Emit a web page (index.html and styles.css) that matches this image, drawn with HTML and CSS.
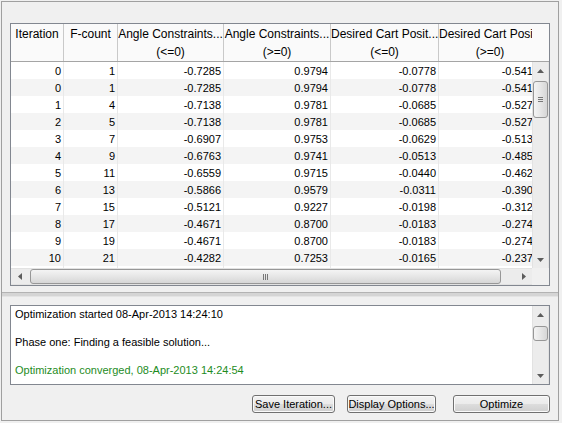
FILE: index.html
```html
<!DOCTYPE html>
<html lang="en">
<head>
  <meta charset="UTF-8" />
  <title>Optimization Progress</title>
  <link rel="stylesheet" href="styles.css">
</head>
<body>

  <div class="window">
    <div class="upper">
      <div class="grid-frame">

        <div class="head-row">
          <div class="head-view">
            <table class="grid head">
              <tr>
                <th class="c1">Iteration</th>
                <th class="c2">F-count</th>
                <th class="c3">Angle Constraints...<br>(&lt;=0)</th>
                <th class="c4">Angle Constraints...<br>(&gt;=0)</th>
                <th class="c5">Desired Cart Posit...<br>(&lt;=0)</th>
                <th class="c6">Desired Cart Position...<br>(&gt;=0)</th>
              </tr>
            </table>
          </div>
          <div class="head-corner"></div>
        </div>

        <div class="body-row">
          <div class="body-view">
            <table class="grid body">
              <tr><td class="c1">0</td><td class="c2">1</td><td class="c3">-0.7285</td><td class="c4">0.9794</td><td class="c5">-0.0778</td><td class="c6">-0.5412</td></tr>
              <tr><td>0</td><td>1</td><td>-0.7285</td><td>0.9794</td><td>-0.0778</td><td>-0.5412</td></tr>
              <tr><td>1</td><td>4</td><td>-0.7138</td><td>0.9781</td><td>-0.0685</td><td>-0.5277</td></tr>
              <tr><td>2</td><td>5</td><td>-0.7138</td><td>0.9781</td><td>-0.0685</td><td>-0.5277</td></tr>
              <tr><td>3</td><td>7</td><td>-0.6907</td><td>0.9753</td><td>-0.0629</td><td>-0.5136</td></tr>
              <tr><td>4</td><td>9</td><td>-0.6763</td><td>0.9741</td><td>-0.0513</td><td>-0.4853</td></tr>
              <tr><td>5</td><td>11</td><td>-0.6559</td><td>0.9715</td><td>-0.0440</td><td>-0.4621</td></tr>
              <tr><td>6</td><td>13</td><td>-0.5866</td><td>0.9579</td><td>-0.0311</td><td>-0.3908</td></tr>
              <tr><td>7</td><td>15</td><td>-0.5121</td><td>0.9227</td><td>-0.0198</td><td>-0.3127</td></tr>
              <tr><td>8</td><td>17</td><td>-0.4671</td><td>0.8700</td><td>-0.0183</td><td>-0.2744</td></tr>
              <tr><td>9</td><td>19</td><td>-0.4671</td><td>0.8700</td><td>-0.0183</td><td>-0.2744</td></tr>
              <tr><td>10</td><td>21</td><td>-0.4282</td><td>0.7253</td><td>-0.0165</td><td>-0.2371</td></tr>
              <tr><td>11</td><td>23</td><td>-0.3894</td><td>0.6412</td><td>-0.0151</td><td>-0.2032</td></tr>
            </table>
          </div>
          <div class="vscroll">
            <div class="arrow">
              <svg width="7" height="4"><polygon points="0,4 3.5,0 7,4" fill="#5c5c5c"/></svg>
            </div>
            <div class="track">
              <div class="thumb v-thumb">
                <svg width="5" height="5"><path d="M0 0.5h5M0 2.5h5M0 4.5h5" stroke="#777" stroke-width="1"/></svg>
              </div>
            </div>
            <div class="arrow">
              <svg width="7" height="4"><polygon points="0,0 7,0 3.5,4" fill="#5c5c5c"/></svg>
            </div>
          </div>
        </div>

        <div class="foot-row">
          <div class="hscroll">
            <div class="arrow">
              <svg width="4" height="7"><polygon points="4,0 4,7 0,3.5" fill="#5c5c5c"/></svg>
            </div>
            <div class="track">
              <div class="thumb h-thumb">
                <svg width="5" height="6"><path d="M0.5 0v6M2.5 0v6M4.5 0v6" stroke="#777" stroke-width="1"/></svg>
              </div>
            </div>
            <div class="arrow">
              <svg width="4" height="7"><polygon points="0,0 4,3.5 0,7" fill="#5c5c5c"/></svg>
            </div>
          </div>
          <div class="corner"></div>
        </div>

      </div>
    </div>

    <div class="splitter"></div>

    <div class="lower">
      <div class="log">
        <div class="log-text">
          Optimization started 08-Apr-2013 14:24:10<br><br>
          Phase one: Finding a feasible solution...<br><br>
          <span class="ok">Optimization converged, 08-Apr-2013 14:24:54</span>
        </div>
        <div class="vscroll log-scroll">
          <div class="arrow">
            <svg width="7" height="4"><polygon points="0,4 3.5,0 7,4" fill="#5c5c5c"/></svg>
          </div>
          <div class="track">
            <div class="thumb v-thumb small"></div>
          </div>
          <div class="arrow">
            <svg width="7" height="4"><polygon points="0,0 7,0 3.5,4" fill="#5c5c5c"/></svg>
          </div>
        </div>
      </div>

      <div class="buttons">
        <button class="btn save">Save Iteration...</button>
        <button class="btn display">Display Options...</button>
        <button class="btn optimize">Optimize</button>
      </div>
    </div>
  </div>

</body>
</html>
```

FILE: styles.css
```css
body {
  margin: 0;
  background: #f0f0f0;
  font-family: "Liberation Sans", Arial, sans-serif;
  color: #000;
}

.window {
  margin: 1px 0 0 1px;
  width: 556px;
  height: 418px;
  border: 1px solid #a0a0a0;
  display: flex;
  flex-direction: column;
}

.upper {
  height: 290px;
  padding: 21px 8px 0;
  box-sizing: border-box;
}

.grid-frame {
  width: 540px;
  height: 263px;
  box-sizing: border-box;
  border: 1px solid #828790;
  background: #fff;
  display: flex;
  flex-direction: column;
}

/* header */
.head-row {
  display: flex;
  height: 38px;
  box-sizing: border-box;
  border-bottom: 1px solid #a5a5a5;
  background: #fafafa;
}

.head-view, .body-view {
  width: 521px;
  overflow: hidden;
}

.head-corner {
  flex: 1;
}

.grid {
  table-layout: fixed;
  border-collapse: separate;
  border-spacing: 0;
  width: 531px;
}

.grid .c1 { width: 53px; }
.grid .c2 { width: 54px; }
.grid .c3 { width: 106px; }
.grid .c4 { width: 107px; }
.grid .c5 { width: 108px; }
.grid .c6 { width: 103px; }

.grid th {
  box-sizing: border-box;
  height: 37px;
  padding: 1px 0 0;
  font-size: 12px;
  font-weight: normal;
  line-height: 18px;
  text-align: center;
  vertical-align: top;
  white-space: nowrap;
  overflow: hidden;
  border-right: 1px solid #c9c9c9;
}

.grid td {
  box-sizing: border-box;
  height: 17px;
  padding: 1px 2px 0 0;
  font-size: 11px;
  line-height: 16px;
  text-align: right;
  white-space: nowrap;
  overflow: hidden;
  border-right: 1px solid #e9e9e9;
}

.grid.body tr:nth-child(even) td {
  background: #f4f4f4;
}

/* table body and scrollbars */
.body-row {
  display: flex;
  height: 206px;
}

.foot-row {
  display: flex;
  height: 17px;
}

.corner {
  flex: 1;
  background: #f0f0f0;
}

.vscroll {
  width: 17px;
  display: flex;
  flex-direction: column;
  background: #ececec;
  box-shadow: inset 1px 0 #e2e2e2, inset -1px 0 #e2e2e2;
}

.hscroll {
  width: 521px;
  display: flex;
  background: #ececec;
  box-shadow: inset 0 1px #e2e2e2, inset 0 -1px #e2e2e2;
}

.arrow {
  width: 17px;
  height: 17px;
  flex: none;
  display: flex;
  align-items: center;
  justify-content: center;
}

.track {
  flex: 1;
  display: flex;
}

.vscroll .track {
  flex-direction: column;
  padding: 2px 1px 0;
}

.hscroll .track {
  padding: 1px 0 1px 2px;
}

.thumb {
  box-sizing: border-box;
  border: 1px solid #979797;
  border-radius: 3px;
  display: flex;
  align-items: center;
  justify-content: center;
}

.v-thumb {
  height: 37px;
  background: linear-gradient(to right, #f4f4f4, #e6e6e6 50%, #d6d6d6);
}

.v-thumb.small {
  height: 15px;
  margin-top: 1px;
}

.h-thumb {
  width: 471px;
  background: linear-gradient(#f4f4f4, #e6e6e6 50%, #d6d6d6);
}

/* splitter */
.splitter {
  height: 5px;
  box-sizing: border-box;
  border-top: 1px solid #b3b3b3;
  border-bottom: 1px solid #e4e4e4;
  background: #d5d5d5;
}

/* lower pane */
.lower {
  height: 123px;
  padding: 8px 8px 7px;
  box-sizing: border-box;
}

.log {
  width: 540px;
  height: 80px;
  box-sizing: border-box;
  border: 1px solid #828790;
  background: #fff;
  display: flex;
}

.log-text {
  flex: 1;
  padding: 1px 4px;
  font-size: 11px;
  line-height: 14px;
  white-space: nowrap;
}

.log-text .ok {
  color: #1e8c1e;
}

.buttons {
  margin-top: 10px;
  height: 18px;
  display: flex;
  justify-content: flex-end;
}

.btn {
  height: 18px;
  padding: 0;
  font-family: "Liberation Sans", Arial, sans-serif;
  font-size: 11px;
  color: #000;
  border: 1px solid #707070;
  border-radius: 3px;
  background: linear-gradient(#f2f2f2, #ebebeb 50%, #dddddd 50%, #cfcfcf);
  box-shadow: inset 0 0 0 1px #fafafa;
}

.btn.save { width: 83px; }
.btn.display { width: 89px; margin-left: 12px; }
.btn.optimize { width: 97px; margin-left: 17px; }
```
